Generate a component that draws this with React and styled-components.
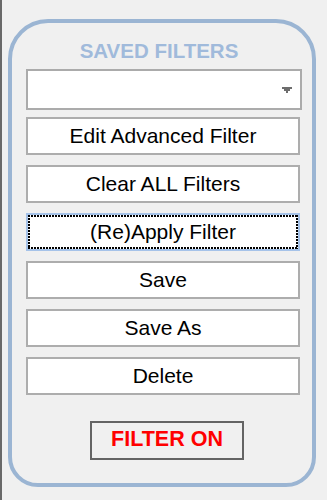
import React from "react";
import styled, { createGlobalStyle } from "styled-components";

const Global = createGlobalStyle`
  html, body { margin: 0; padding: 0; background: #f0f0f0; }
  body { font-family: "Liberation Sans", Arial, sans-serif; }
`;

const Page = styled.div`
  display: flex;
  height: 500px;
  background: #f0f0f0;
`;

const EdgeBar = styled.div`
  width: 2px;
  flex: none;
  background: #696969;
`;

const Panel = styled.div`
  box-sizing: border-box;
  margin: 19px 0 0 6px;
  width: 308px;
  height: 468px;
  border: 4px solid #9bb5d3;
  border-radius: 40px 40px 30px 30px;
  padding: 16px 10px 23px 14px;
  display: flex;
  flex-direction: column;
  align-items: flex-start;
`;

const Title = styled.div`
  align-self: stretch;
  text-align: center;
  padding-right: 10px;
  font-size: 20.5px;
  line-height: 24px;
  font-weight: bold;
  color: #a0badb;
  margin-bottom: 6px;
`;

const Combo = styled.div`
  box-sizing: border-box;
  width: 276px;
  height: 41px;
  border: 2px solid #ababab;
  background: #fff;
  display: flex;
  align-items: center;
  justify-content: flex-end;
  padding-right: 8px;
  margin-bottom: 7px;
`;

const Buttons = styled.div`
  display: flex;
  flex-direction: column;
  gap: 10px;
`;

const Button = styled.div`
  position: relative;
  box-sizing: border-box;
  width: 274px;
  height: 38px;
  border: 2px solid ${(p) => (p.$focused ? "#a6c3e9" : "#adadad")};
  background: #fff;
  display: flex;
  align-items: center;
  justify-content: center;
  font-size: 21px;
  color: #000;
  ${(p) =>
    p.$focused &&
    `
    &::after {
      content: "";
      position: absolute;
      inset: 0;
      background:
        repeating-linear-gradient(90deg, #000 0 2px, transparent 2px 3px) top left / 100% 2px no-repeat,
        repeating-linear-gradient(90deg, #000 0 2px, transparent 2px 3px) bottom left / 100% 2px no-repeat,
        repeating-linear-gradient(180deg, #000 0 2px, transparent 2px 3px) top left / 2px 100% no-repeat,
        repeating-linear-gradient(180deg, #000 0 2px, transparent 2px 3px) top right / 2px 100% no-repeat;
    }
  `}
`;

const Status = styled.div`
  box-sizing: border-box;
  margin: 26px 0 0 64px;
  width: 154px;
  height: 39px;
  border: 2px solid #646464;
  display: flex;
  align-items: center;
  justify-content: center;
  padding: 0 0 3px 0;
  font-size: 21.5px;
  font-weight: bold;
  color: #ff0000;
`;

const Arrow = () => (
  <svg width="10" height="6" viewBox="0 0 10 6" style={{ display: "block", marginTop: 1 }}>
    <path d="M0 0H10V2H8V4H6V6H4V4H2V2H0Z" fill="#6d6d6d" />
  </svg>
);

const labels = [
  "Edit Advanced Filter",
  "Clear ALL Filters",
  "(Re)Apply Filter",
  "Save",
  "Save As",
  "Delete",
];

export default function App() {
  return (
    <>
      <Global />
      <Page>
        <EdgeBar />
        <Panel>
          <Title>SAVED FILTERS</Title>
          <Combo>
            <Arrow />
          </Combo>
          <Buttons>
            {labels.map((l) => (
              <Button key={l} $focused={l === "(Re)Apply Filter"}>
                {l}
              </Button>
            ))}
          </Buttons>
          <Status>FILTER ON</Status>
        </Panel>
      </Page>
    </>
  );
}
